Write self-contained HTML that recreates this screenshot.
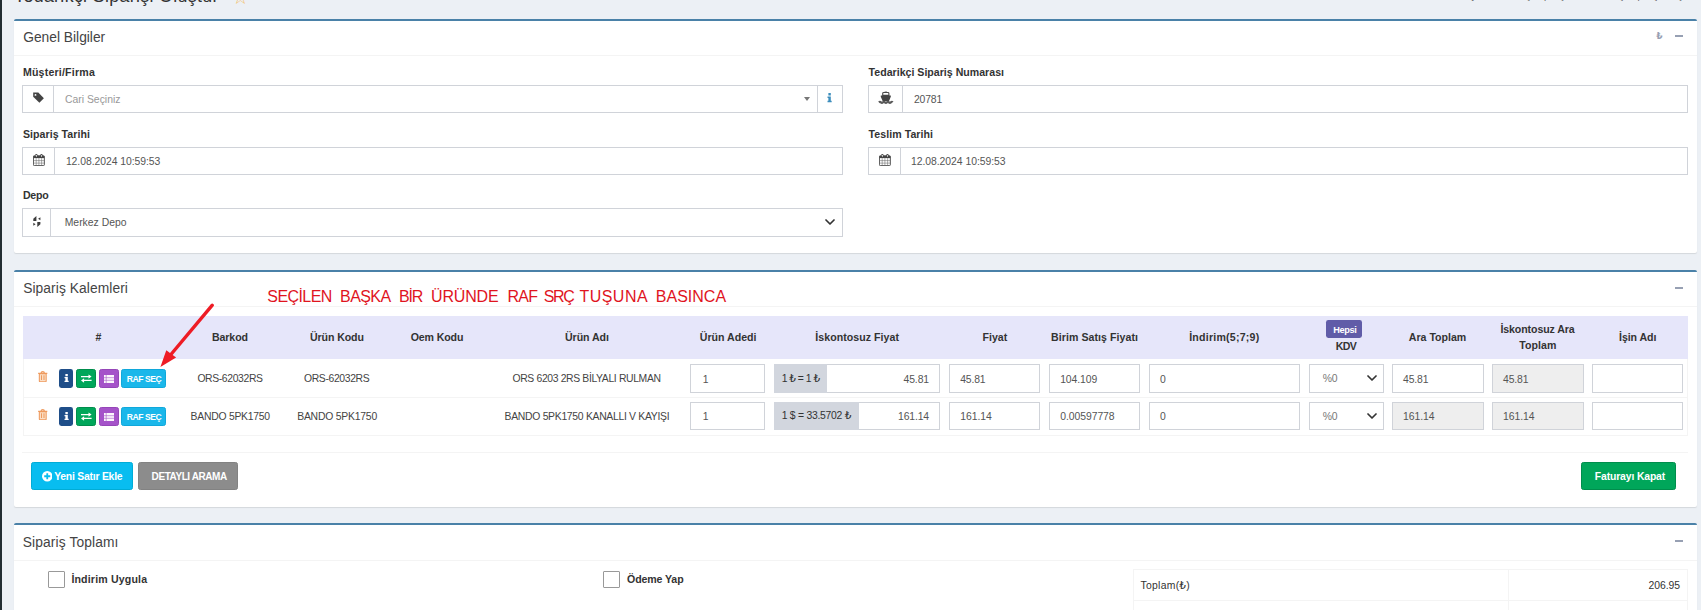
<!DOCTYPE html>
<html lang="tr"><head><meta charset="utf-8"><title>Tedarikçi Siparişi Oluştur</title>
<style>
html,body{margin:0;padding:0;}
body{width:1701px;height:610px;overflow:hidden;background:#ecf0f5;position:relative;font-family:"Liberation Sans","DejaVu Sans",sans-serif;}
.r{position:absolute;box-sizing:border-box;display:block;}
.t{position:absolute;white-space:nowrap;line-height:1;margin:0;padding:0;font-weight:normal;display:block;}
</style></head>
<body>
<div class="r" style="left:0px;top:0px;width:2px;height:610px;background:#222d32;"></div>
<header>
<h1 class="t" style="top:-14px;line-height:20px;font-size:17.8px;color:#333;letter-spacing:0.340px;left:14.20px;">Tedarikçi Siparişi Oluştur</h1>
<span class="t" style="top:-14px;line-height:22px;font-size:19px;color:#f3c06a;font-family:DejaVu Sans,Liberation Sans,sans-serif;left:232.00px;">☆</span>
<nav class="t" style="top:-10px;line-height:11px;font-size:9.6px;color:#666;right:7.00px;">Anasayfa &gt; Tedarikçi Siparişleri &gt; Tedarikçi Siparişi Oluştur</nav>
</header>
<main>
<section>
<div class="r" style="left:14px;top:19px;width:1683px;height:234px;background:#fff;border-top:2px solid #4a81a8;border-radius:2px;box-shadow:0 1px 1px rgba(0,0,0,.1);"></div>
<div class="r" style="left:14px;top:55px;width:1683px;height:1px;background:#f4f4f4;"></div>
<h3 class="t" style="top:30px;line-height:15px;font-size:13.8px;color:#444;letter-spacing:-0.004px;left:23.20px;">Genel Bilgiler</h3>
<span class="t" style="top:31px;line-height:10px;font-size:9px;color:#97a0b3;font-weight:bold;font-family:DejaVu Sans,Liberation Sans,sans-serif;left:1656.30px;">₺</span>
<div class="r" style="left:1675px;top:35px;width:8px;height:2px;background:#97a0b3;"></div>
<label class="t" style="top:66px;line-height:12px;font-size:10.6px;color:#333;font-weight:bold;letter-spacing:0.202px;left:22.90px;">Müşteri/Firma</label>
<div class="r" style="left:22px;top:85px;width:821px;height:28px;background:#fff;border:1px solid #d0d3d9;"></div>
<div class="r" style="left:53px;top:85px;width:1px;height:28px;background:#d0d3d9;"></div>
<div class="r" style="left:817px;top:85px;width:1px;height:28px;background:#d0d3d9;"></div>
<span class="t" style="top:94px;line-height:11px;font-size:10.4px;color:#999;letter-spacing:0.014px;left:64.90px;">Cari Seçiniz</span>
<svg class="r" style="left:32px;top:91px;" width="13" height="13" viewBox="32 91 13 13" preserveAspectRatio="none"><path d="M33.2 92.6 L38.3 92.6 L43.9 98.2 L39.4 102.8 L33.2 96.8 Z" fill="#444"/><circle cx="35.5" cy="94.9" r="0.95" fill="#fff"/></svg>
<svg class="r" style="left:804px;top:97px;" width="6" height="4" viewBox="0 0 6 4" preserveAspectRatio="none"><path d="M0 0 L6 0 L3 3.9 Z" fill="#777"/></svg>
<svg class="r" style="left:827.4px;top:92.7px;overflow:visible" width="5.2" height="9.2" viewBox="0 0 6 9" preserveAspectRatio="none"><path d="M1.6 0 H4.4 V2.4 H1.6 Z M0.6 3.4 H4.4 V7.6 H5.4 V9 H0.6 V7.6 H1.6 V4.8 H0.6 Z" fill="#3c8dbc"/></svg>
<label class="t" style="top:66px;line-height:12px;font-size:10.6px;color:#333;font-weight:bold;letter-spacing:0.006px;left:868.60px;">Tedarikçi Sipariş Numarası</label>
<div class="r" style="left:868px;top:85px;width:820px;height:28px;background:#fff;border:1px solid #d0d3d9;"></div>
<div class="r" style="left:902px;top:85px;width:1px;height:28px;background:#d0d3d9;"></div>
<span class="t" style="top:94px;line-height:11px;font-size:10.4px;color:#555;letter-spacing:-0.181px;left:914.00px;">20781</span>
<svg class="r" style="left:878px;top:91px;" width="16" height="14" viewBox="0 0 16 14" preserveAspectRatio="none"><path d="M4.7 4.4 V2.4 Q4.7 1.5 5.6 1.5 H10 Q10.9 1.5 10.9 2.4 V4.4 Z" fill="#fff" stroke="#4a4a4a" stroke-width="1.1"/><path d="M6.6 0.6 H9 V1.6 H6.6 Z" fill="#4a4a4a"/><path d="M2.8 4.4 H12.8 V5.8 L11 9.9 H4.6 L2.8 5.8 Z" fill="#444"/><path d="M0.9 11.3 Q1.9 10.5 2.9 11.3 T4.9 11.3 T6.9 11.3 T8.9 11.3 T10.9 11.3 T12.9 11.3 T14.7 11.3" stroke="#5a5a5a" stroke-width="2.3" fill="none"/></svg>
<label class="t" style="top:128px;line-height:12px;font-size:10.6px;color:#333;font-weight:bold;letter-spacing:0.054px;left:22.90px;">Sipariş Tarihi</label>
<div class="r" style="left:22px;top:147px;width:821px;height:28px;background:#fff;border:1px solid #d0d3d9;"></div>
<div class="r" style="left:54px;top:147px;width:1px;height:28px;background:#d0d3d9;"></div>
<svg class="r" style="left:33.4px;top:153.9px;" width="12" height="12" viewBox="0 0 12 12" preserveAspectRatio="none"><rect x="0.45" y="1.8" width="10.9" height="9.8" rx="0.8" fill="#fff" stroke="#444" stroke-width="0.9"/><rect x="0.45" y="1.8" width="10.9" height="2.3" fill="#444"/><rect x="2.2" y="0" width="2.3" height="3.6" rx="1" fill="#444"/><rect x="7.3" y="0" width="2.3" height="3.6" rx="1" fill="#444"/><rect x="2.95" y="0.8" width="0.8" height="2" rx="0.4" fill="#fff"/><rect x="8.05" y="0.8" width="0.8" height="2" rx="0.4" fill="#fff"/><path d="M3.2 4.1 V11.6 M5.9 4.1 V11.6 M8.6 4.1 V11.6 M0.45 6.6 H11.35 M0.45 9.1 H11.35" stroke="#6a6a6a" stroke-width="0.55"/></svg>
<span class="t" style="top:156px;line-height:11px;font-size:10.4px;color:#555;letter-spacing:-0.050px;left:65.90px;">12.08.2024 10:59:53</span>
<label class="t" style="top:128px;line-height:12px;font-size:10.6px;color:#333;font-weight:bold;letter-spacing:0.048px;left:868.60px;">Teslim Tarihi</label>
<div class="r" style="left:868px;top:147px;width:820px;height:28px;background:#fff;border:1px solid #d0d3d9;"></div>
<div class="r" style="left:900px;top:147px;width:1px;height:28px;background:#d0d3d9;"></div>
<svg class="r" style="left:878.6px;top:153.9px;" width="12" height="12" viewBox="0 0 12 12" preserveAspectRatio="none"><rect x="0.45" y="1.8" width="10.9" height="9.8" rx="0.8" fill="#fff" stroke="#444" stroke-width="0.9"/><rect x="0.45" y="1.8" width="10.9" height="2.3" fill="#444"/><rect x="2.2" y="0" width="2.3" height="3.6" rx="1" fill="#444"/><rect x="7.3" y="0" width="2.3" height="3.6" rx="1" fill="#444"/><rect x="2.95" y="0.8" width="0.8" height="2" rx="0.4" fill="#fff"/><rect x="8.05" y="0.8" width="0.8" height="2" rx="0.4" fill="#fff"/><path d="M3.2 4.1 V11.6 M5.9 4.1 V11.6 M8.6 4.1 V11.6 M0.45 6.6 H11.35 M0.45 9.1 H11.35" stroke="#6a6a6a" stroke-width="0.55"/></svg>
<span class="t" style="top:156px;line-height:11px;font-size:10.4px;color:#555;letter-spacing:-0.044px;left:911.00px;">12.08.2024 10:59:53</span>
<label class="t" style="top:189px;line-height:12px;font-size:10.6px;color:#333;font-weight:bold;letter-spacing:-0.221px;left:22.90px;">Depo</label>
<div class="r" style="left:22px;top:208px;width:821px;height:29px;background:#fff;border:1px solid #d0d3d9;"></div>
<div class="r" style="left:50px;top:208px;width:1px;height:29px;background:#d0d3d9;"></div>
<svg class="r" style="left:33px;top:216px;" width="8" height="11" viewBox="0 0 8 11" preserveAspectRatio="none"><path d="M0.3 2.8 L3.4 0 V5 H0.3 Z M0.3 6.8 L2.6 8.2 L0.3 9.7 Z M7.4 8.2 L4.3 11 V6 H7.4 Z M7.4 4.2 L5.1 2.8 L7.4 1.3 Z" fill="#3c3c3c"/></svg>
<span class="t" style="top:217px;line-height:11px;font-size:10.4px;color:#555;letter-spacing:0.009px;left:64.70px;">Merkez Depo</span>
<svg class="r" style="left:825px;top:219px;" width="10" height="6" viewBox="0 0 10 6" preserveAspectRatio="none"><path d="M1 1 L5 5 L9 1" fill="none" stroke="#333" stroke-width="1.7" stroke-linecap="round" stroke-linejoin="round"/></svg>
</section>
<section>
<div class="r" style="left:14px;top:270px;width:1683px;height:237px;background:#fff;border-top:2px solid #4a81a8;border-radius:2px;box-shadow:0 1px 1px rgba(0,0,0,.1);"></div>
<div class="r" style="left:14px;top:306px;width:1683px;height:1px;background:#f4f4f4;"></div>
<h3 class="t" style="top:281px;line-height:15px;font-size:13.8px;color:#444;letter-spacing:0.076px;left:23.20px;">Sipariş Kalemleri</h3>
<div class="r" style="left:1675px;top:287px;width:8px;height:2px;background:#97a0b3;"></div>
<span class="t" style="top:288px;line-height:17px;font-size:16px;color:#e0141e;letter-spacing:-0.581px;left:267.30px;">SEÇİLEN</span>
<span class="t" style="top:288px;line-height:17px;font-size:16px;color:#e0141e;letter-spacing:-0.592px;left:340.10px;">BAŞKA</span>
<span class="t" style="top:288px;line-height:17px;font-size:16px;color:#e0141e;letter-spacing:-1.124px;left:399.00px;">BİR</span>
<span class="t" style="top:288px;line-height:17px;font-size:16px;color:#e0141e;letter-spacing:-0.176px;left:431.00px;">ÜRÜNDE</span>
<span class="t" style="top:288px;line-height:17px;font-size:16px;color:#e0141e;letter-spacing:-0.700px;left:507.40px;">RAF</span>
<span class="t" style="top:288px;line-height:17px;font-size:16px;color:#e0141e;letter-spacing:-1.394px;left:543.70px;">SRÇ</span>
<span class="t" style="top:288px;line-height:17px;font-size:16px;color:#e0141e;letter-spacing:0.486px;left:579.40px;">TUŞUNA</span>
<span class="t" style="top:288px;line-height:17px;font-size:16px;color:#e0141e;letter-spacing:0.007px;left:655.80px;">BASINCA</span>
<div class="r" style="left:23px;top:316px;width:1665px;height:43px;background:#e6e6fa;"></div>
<div class="r" style="left:23px;top:397px;width:1665px;height:1px;background:#f4f4f4;"></div>
<div class="r" style="left:23px;top:435px;width:1665px;height:1px;background:#f4f4f4;"></div>
<div class="r" style="left:22px;top:452px;width:1666px;height:1px;background:#f4f4f4;"></div>
<div class="r" style="left:23px;top:359px;width:1px;height:77px;background:#f4f4f4;"></div>
<div class="r" style="left:1687px;top:359px;width:1px;height:77px;background:#f4f4f4;"></div>
<span class="t" style="top:331px;line-height:12px;font-size:10.6px;color:#333;font-weight:bold;letter-spacing:-0.406px;left:95.50px;">#</span>
<span class="t" style="top:331px;line-height:12px;font-size:10.6px;color:#333;font-weight:bold;letter-spacing:-0.067px;left:211.90px;">Barkod</span>
<span class="t" style="top:331px;line-height:12px;font-size:10.6px;color:#333;font-weight:bold;letter-spacing:-0.104px;left:310.00px;">Ürün Kodu</span>
<span class="t" style="top:331px;line-height:12px;font-size:10.6px;color:#333;font-weight:bold;letter-spacing:-0.120px;left:410.70px;">Oem Kodu</span>
<span class="t" style="top:331px;line-height:12px;font-size:10.6px;color:#333;font-weight:bold;letter-spacing:-0.068px;left:565.00px;">Ürün Adı</span>
<span class="t" style="top:331px;line-height:12px;font-size:10.6px;color:#333;font-weight:bold;letter-spacing:-0.000px;left:699.80px;">Ürün Adedi</span>
<span class="t" style="top:331px;line-height:12px;font-size:10.6px;color:#333;font-weight:bold;letter-spacing:0.044px;left:815.30px;">İskontosuz Fiyat</span>
<span class="t" style="top:331px;line-height:12px;font-size:10.6px;color:#333;font-weight:bold;letter-spacing:-0.007px;left:982.50px;">Fiyat</span>
<span class="t" style="top:331px;line-height:12px;font-size:10.6px;color:#333;font-weight:bold;letter-spacing:0.052px;left:1051.10px;">Birim Satış Fiyatı</span>
<span class="t" style="top:331px;line-height:12px;font-size:10.6px;color:#333;font-weight:bold;letter-spacing:0.228px;left:1189.20px;">İndirim(5;7;9)</span>
<span class="t" style="top:331px;line-height:12px;font-size:10.6px;color:#333;font-weight:bold;left:1408.80px;">Ara Toplam</span>
<span class="t" style="top:331px;line-height:12px;font-size:10.6px;color:#333;font-weight:bold;letter-spacing:-0.059px;left:1619.00px;">İşin Adı</span>
<span class="t" style="top:323px;line-height:12px;font-size:10.6px;color:#333;font-weight:bold;letter-spacing:-0.096px;left:1500.40px;">İskontosuz Ara</span>
<span class="t" style="top:339px;line-height:12px;font-size:10.6px;color:#333;font-weight:bold;letter-spacing:0.068px;left:1519.20px;">Toplam</span>
<span class="t" style="top:340px;line-height:12px;font-size:10.6px;color:#333;font-weight:bold;letter-spacing:-0.725px;left:1335.80px;">KDV</span>
<div class="r" style="left:1326px;top:320px;width:36px;height:18px;background:#605ca8;border-radius:2.4px;"></div>
<span class="t" style="top:325px;line-height:10px;font-size:9.2px;color:#fff;font-weight:bold;letter-spacing:-0.346px;left:1333.20px;">Hepsi</span>
<svg class="r" style="left:38px;top:371.09999999999997px;" width="9.5" height="11" viewBox="0 0 10 11" preserveAspectRatio="none"><path d="M1.4 2.6 H8.6 V10 Q8.6 10.8 7.8 10.8 H2.2 Q1.4 10.8 1.4 10 Z" fill="#fbe0c8" stroke="#ee9a5e" stroke-width="1.1"/><path d="M0.2 2.4 H9.8 M3.2 2.2 Q3.4 0.7 5 0.7 Q6.6 0.7 6.8 2.2" fill="none" stroke="#ee9a5e" stroke-width="1.3"/><path d="M3.7 4.3 V9 M6.3 4.3 V9" fill="none" stroke="#ee9a5e" stroke-width="1.1"/></svg>
<div class="r" style="left:59px;top:369px;width:14px;height:19px;background:#1f4e89;border-radius:2.4px;"></div>
<svg class="r" style="left:63.6px;top:374.2px;" width="5.2" height="8" viewBox="0 0 6 9" preserveAspectRatio="none"><path d="M1.6 0 H4.4 V2.4 H1.6 Z M0.6 3.4 H4.4 V7.6 H5.4 V9 H0.6 V7.6 H1.6 V4.8 H0.6 Z" fill="#fff"/></svg>
<div class="r" style="left:76px;top:369px;width:20px;height:19px;background:#00a65a;border:1px solid #008d4c;border-radius:2.4px;"></div>
<svg class="r" style="left:80.8px;top:374.3px;overflow:visible" width="10.6" height="8.6" viewBox="0 0 12 11" preserveAspectRatio="none"><path d="M0 3 H8.5 V1 L12 3.8 L8.5 6.6 V4.6 H0 Z" fill="#fff" transform="translate(0,-0.5)"/><path d="M12 8 H3.5 V6 L0 8.8 L3.5 11.6 V9.6 H12 Z" fill="#fff" transform="translate(0,-0.5)"/></svg>
<div class="r" style="left:99px;top:369px;width:20px;height:19px;background:#a553c9;border:1px solid #9546b8;border-radius:2.4px;"></div>
<svg class="r" style="left:104px;top:374.5px;" width="10" height="8" viewBox="0 0 10 8" preserveAspectRatio="none"><rect x="0" y="0" width="10" height="8" fill="#fff" opacity="0.95"/><path d="M0 2.7 H10 M0 5.3 H10 M2.2 0 V8" stroke="#a35bc4" stroke-width="0.6"/></svg>
<div class="r" style="left:121px;top:369px;width:45px;height:19px;background:#1ab7ea;border:1px solid #10a8db;border-radius:2.4px;"></div>
<span class="t" style="top:374px;line-height:10px;font-size:8.6px;color:#fff;font-weight:bold;letter-spacing:-0.433px;left:126.70px;">RAF SEÇ</span>
<span class="t" style="top:373px;line-height:11px;font-size:10.4px;color:#444;letter-spacing:-0.374px;left:197.40px;">ORS-62032RS</span>
<span class="t" style="top:373px;line-height:11px;font-size:10.4px;color:#444;letter-spacing:-0.365px;left:304.00px;">ORS-62032RS</span>
<span class="t" style="top:373px;line-height:11px;font-size:10.4px;color:#444;letter-spacing:-0.361px;left:512.50px;">ORS 6203 2RS BİLYALI RULMAN</span>
<div class="r" style="left:690px;top:364px;width:75px;height:29px;background:#fff;border:1px solid #d0d3d9;"></div>
<span class="t" style="top:374px;line-height:11px;font-size:10.4px;color:#555;left:702.70px;">1</span>
<div class="r" style="left:774px;top:364px;width:166px;height:29px;background:#fff;border:1px solid #d0d3d9;"></div>
<div class="r" style="left:774px;top:364px;width:53px;height:29px;background:#d2d6de;"></div>
<span class="t" style="top:373px;line-height:11px;font-size:10.4px;color:#333;letter-spacing:-0.512px;left:781.70px;">1 ₺ = 1 ₺</span>
<span class="t" style="top:374px;line-height:11px;font-size:10.4px;color:#555;letter-spacing:-0.103px;left:903.50px;">45.81</span>
<div class="r" style="left:949px;top:364px;width:91px;height:29px;background:#fff;border:1px solid #d0d3d9;"></div>
<span class="t" style="top:374px;line-height:11px;font-size:10.4px;color:#555;letter-spacing:-0.143px;left:960.20px;">45.81</span>
<div class="r" style="left:1049px;top:364px;width:91px;height:29px;background:#fff;border:1px solid #d0d3d9;"></div>
<span class="t" style="top:374px;line-height:11px;font-size:10.4px;color:#555;letter-spacing:-0.095px;left:1060.20px;">104.109</span>
<div class="r" style="left:1149px;top:364px;width:151px;height:29px;background:#fff;border:1px solid #d0d3d9;"></div>
<span class="t" style="top:374px;line-height:11px;font-size:10.4px;color:#555;left:1160.00px;">0</span>
<div class="r" style="left:1309px;top:364px;width:75px;height:29px;background:#fff;border:1px solid #d0d3d9;"></div>
<span class="t" style="top:373px;line-height:11px;font-size:10.4px;color:#777;letter-spacing:-0.166px;left:1322.80px;">%0</span>
<svg class="r" style="left:1366.5px;top:375.2px;" width="10" height="6" viewBox="0 0 10 6" preserveAspectRatio="none"><path d="M1 1 L5 5 L9 1" fill="none" stroke="#333" stroke-width="1.7" stroke-linecap="round" stroke-linejoin="round"/></svg>
<div class="r" style="left:1392px;top:364px;width:92px;height:29px;background:#fff;border:1px solid #d0d3d9;"></div>
<span class="t" style="top:374px;line-height:11px;font-size:10.4px;color:#555;letter-spacing:-0.143px;left:1403.00px;">45.81</span>
<div class="r" style="left:1492px;top:364px;width:92px;height:29px;background:#eee;border:1px solid #d0d3d9;"></div>
<span class="t" style="top:374px;line-height:11px;font-size:10.4px;color:#555;letter-spacing:-0.143px;left:1503.00px;">45.81</span>
<div class="r" style="left:1592px;top:364px;width:91px;height:29px;background:#fff;border:1px solid #d0d3d9;"></div>
<svg class="r" style="left:38px;top:408.7px;" width="9.5" height="11" viewBox="0 0 10 11" preserveAspectRatio="none"><path d="M1.4 2.6 H8.6 V10 Q8.6 10.8 7.8 10.8 H2.2 Q1.4 10.8 1.4 10 Z" fill="#fbe0c8" stroke="#ee9a5e" stroke-width="1.1"/><path d="M0.2 2.4 H9.8 M3.2 2.2 Q3.4 0.7 5 0.7 Q6.6 0.7 6.8 2.2" fill="none" stroke="#ee9a5e" stroke-width="1.3"/><path d="M3.7 4.3 V9 M6.3 4.3 V9" fill="none" stroke="#ee9a5e" stroke-width="1.1"/></svg>
<div class="r" style="left:59px;top:407px;width:14px;height:19px;background:#1f4e89;border-radius:2.4px;"></div>
<svg class="r" style="left:63.6px;top:412.2px;" width="5.2" height="8" viewBox="0 0 6 9" preserveAspectRatio="none"><path d="M1.6 0 H4.4 V2.4 H1.6 Z M0.6 3.4 H4.4 V7.6 H5.4 V9 H0.6 V7.6 H1.6 V4.8 H0.6 Z" fill="#fff"/></svg>
<div class="r" style="left:76px;top:407px;width:20px;height:19px;background:#00a65a;border:1px solid #008d4c;border-radius:2.4px;"></div>
<svg class="r" style="left:80.8px;top:412.3px;overflow:visible" width="10.6" height="8.6" viewBox="0 0 12 11" preserveAspectRatio="none"><path d="M0 3 H8.5 V1 L12 3.8 L8.5 6.6 V4.6 H0 Z" fill="#fff" transform="translate(0,-0.5)"/><path d="M12 8 H3.5 V6 L0 8.8 L3.5 11.6 V9.6 H12 Z" fill="#fff" transform="translate(0,-0.5)"/></svg>
<div class="r" style="left:99px;top:407px;width:20px;height:19px;background:#a553c9;border:1px solid #9546b8;border-radius:2.4px;"></div>
<svg class="r" style="left:104px;top:412.5px;" width="10" height="8" viewBox="0 0 10 8" preserveAspectRatio="none"><rect x="0" y="0" width="10" height="8" fill="#fff" opacity="0.95"/><path d="M0 2.7 H10 M0 5.3 H10 M2.2 0 V8" stroke="#a35bc4" stroke-width="0.6"/></svg>
<div class="r" style="left:121px;top:407px;width:45px;height:19px;background:#1ab7ea;border:1px solid #10a8db;border-radius:2.4px;"></div>
<span class="t" style="top:412px;line-height:10px;font-size:8.6px;color:#fff;font-weight:bold;letter-spacing:-0.433px;left:126.70px;">RAF SEÇ</span>
<span class="t" style="top:411px;line-height:11px;font-size:10.4px;color:#444;letter-spacing:-0.253px;left:190.60px;">BANDO 5PK1750</span>
<span class="t" style="top:411px;line-height:11px;font-size:10.4px;color:#444;letter-spacing:-0.215px;left:297.20px;">BANDO 5PK1750</span>
<span class="t" style="top:411px;line-height:11px;font-size:10.4px;color:#444;letter-spacing:-0.299px;left:504.60px;">BANDO 5PK1750 KANALLI V KAYIŞI</span>
<div class="r" style="left:690px;top:402px;width:75px;height:28px;background:#fff;border:1px solid #d0d3d9;"></div>
<span class="t" style="top:411px;line-height:11px;font-size:10.4px;color:#555;left:702.70px;">1</span>
<div class="r" style="left:774px;top:402px;width:166px;height:28px;background:#fff;border:1px solid #d0d3d9;"></div>
<div class="r" style="left:774px;top:402px;width:85px;height:28px;background:#d2d6de;"></div>
<span class="t" style="top:410px;line-height:11px;font-size:10.4px;color:#333;letter-spacing:-0.263px;left:781.70px;">1 $ = 33.5702 ₺</span>
<span class="t" style="top:411px;line-height:11px;font-size:10.4px;color:#555;letter-spacing:-0.130px;left:898.00px;">161.14</span>
<div class="r" style="left:949px;top:402px;width:91px;height:28px;background:#fff;border:1px solid #d0d3d9;"></div>
<span class="t" style="top:411px;line-height:11px;font-size:10.4px;color:#555;letter-spacing:-0.030px;left:960.20px;">161.14</span>
<div class="r" style="left:1049px;top:402px;width:91px;height:28px;background:#fff;border:1px solid #d0d3d9;"></div>
<span class="t" style="top:411px;line-height:11px;font-size:10.4px;color:#555;letter-spacing:-0.051px;left:1060.20px;">0.00597778</span>
<div class="r" style="left:1149px;top:402px;width:151px;height:28px;background:#fff;border:1px solid #d0d3d9;"></div>
<span class="t" style="top:411px;line-height:11px;font-size:10.4px;color:#555;left:1160.00px;">0</span>
<div class="r" style="left:1309px;top:402px;width:75px;height:28px;background:#fff;border:1px solid #d0d3d9;"></div>
<span class="t" style="top:411px;line-height:11px;font-size:10.4px;color:#777;letter-spacing:-0.166px;left:1322.80px;">%0</span>
<svg class="r" style="left:1366.5px;top:413.2px;" width="10" height="6" viewBox="0 0 10 6" preserveAspectRatio="none"><path d="M1 1 L5 5 L9 1" fill="none" stroke="#333" stroke-width="1.7" stroke-linecap="round" stroke-linejoin="round"/></svg>
<div class="r" style="left:1392px;top:402px;width:92px;height:28px;background:#eee;border:1px solid #d0d3d9;"></div>
<span class="t" style="top:411px;line-height:11px;font-size:10.4px;color:#555;letter-spacing:-0.030px;left:1403.00px;">161.14</span>
<div class="r" style="left:1492px;top:402px;width:92px;height:28px;background:#eee;border:1px solid #d0d3d9;"></div>
<span class="t" style="top:411px;line-height:11px;font-size:10.4px;color:#555;letter-spacing:-0.030px;left:1503.00px;">161.14</span>
<div class="r" style="left:1592px;top:402px;width:91px;height:28px;background:#fff;border:1px solid #d0d3d9;"></div>
<svg class="r" style="left:150px;top:295px" width="80" height="80" viewBox="150 295 80 80"><path d="M212.3 305.2 L170.5 355" stroke="#ee1c25" stroke-width="3.4" stroke-linecap="round" fill="none"/><path d="M160.4 367.1 L166.3 350.2 L176.1 357.6 Z" fill="#ee1c25"/></svg>
<div class="r" style="left:31px;top:462px;width:102px;height:28px;background:#08bdf0;border:1px solid #00acd6;border-radius:2.4px;"></div>
<svg class="r" style="left:41.8px;top:471px;" width="10.5" height="10.5" viewBox="0 0 10.5 10.5" preserveAspectRatio="none"><circle cx="5.25" cy="5.25" r="5.25" fill="#fff"/><path d="M5.25 2.2 V8.3 M2.2 5.25 H8.3" stroke="#08bdf0" stroke-width="1.8"/></svg>
<span class="t" style="top:471px;line-height:11px;font-size:10.4px;color:#fff;font-weight:bold;letter-spacing:-0.228px;left:54.20px;">Yeni Satır Ekle</span>
<div class="r" style="left:138px;top:462px;width:100px;height:28px;background:#8c8c8c;border:1px solid #828282;border-radius:2.4px;"></div>
<span class="t" style="top:471px;line-height:11px;font-size:10.0px;color:#fff;font-weight:bold;letter-spacing:-0.427px;left:151.60px;">DETAYLI ARAMA</span>
<div class="r" style="left:1581px;top:462px;width:95px;height:28px;background:#00a65a;border:1px solid #008d4c;border-radius:2.4px;"></div>
<span class="t" style="top:471px;line-height:11px;font-size:10.4px;color:#fff;font-weight:bold;letter-spacing:-0.135px;left:1594.80px;">Faturayı Kapat</span>
</section>
<section>
<div class="r" style="left:14px;top:523px;width:1683px;height:117px;background:#fff;border-top:2px solid #4a81a8;border-radius:2px;box-shadow:0 1px 1px rgba(0,0,0,.1);"></div>
<div class="r" style="left:14px;top:560px;width:1683px;height:1px;background:#f4f4f4;"></div>
<h3 class="t" style="top:535px;line-height:15px;font-size:13.8px;color:#444;letter-spacing:0.121px;left:22.70px;">Sipariş Toplamı</h3>
<div class="r" style="left:1675px;top:540px;width:8px;height:2px;background:#97a0b3;"></div>
<div class="r" style="left:48px;top:571px;width:17px;height:17px;background:#fff;border:1px solid #999;border-radius:1px;"></div>
<label class="t" style="top:573px;line-height:12px;font-size:10.6px;color:#333;font-weight:bold;letter-spacing:0.159px;left:71.40px;">İndirim Uygula</label>
<div class="r" style="left:603px;top:571px;width:17px;height:17px;background:#fff;border:1px solid #999;border-radius:1px;"></div>
<label class="t" style="top:573px;line-height:12px;font-size:10.6px;color:#333;font-weight:bold;letter-spacing:-0.113px;left:627.00px;">Ödeme Yap</label>
<div class="r" style="left:1133px;top:569px;width:555px;height:71px;background:#fff;border:1px solid #f4f4f4;"></div>
<div class="r" style="left:1133px;top:600px;width:555px;height:1px;background:#f4f4f4;"></div>
<div class="r" style="left:1508px;top:569px;width:1px;height:71px;background:#f4f4f4;"></div>
<span class="t" style="top:580px;line-height:11px;font-size:10.4px;color:#333;letter-spacing:0.274px;left:1140.50px;">Toplam(₺)</span>
<span class="t" style="top:580px;line-height:11px;font-size:10.4px;color:#333;letter-spacing:-0.047px;left:1648.50px;">206.95</span>
</section>
</main>
</body></html>
